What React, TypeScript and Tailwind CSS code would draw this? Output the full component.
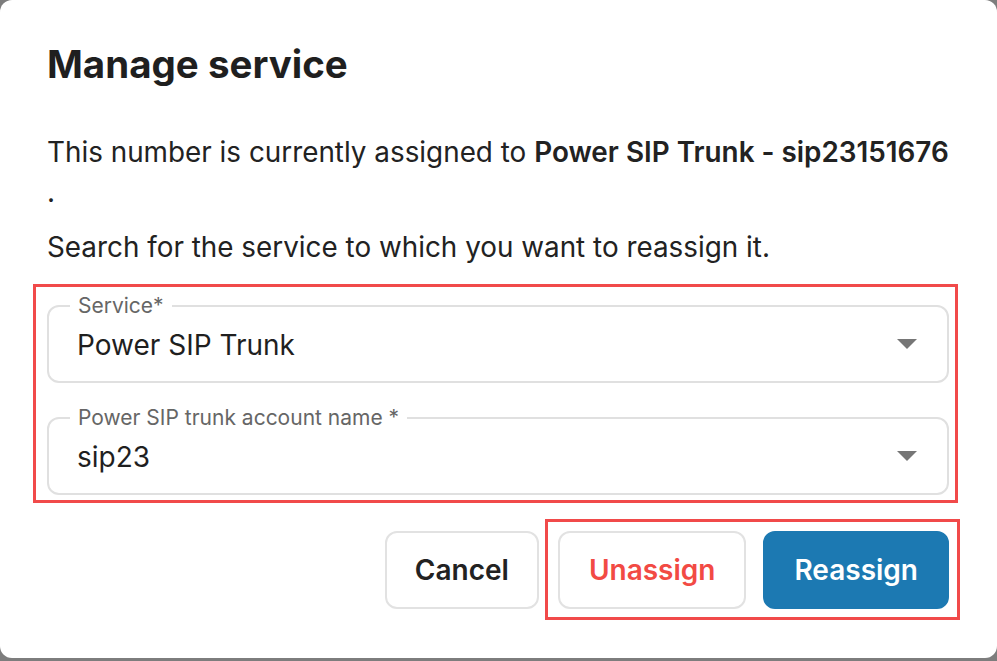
import { useState } from "react";

function Caret() {
  return (
    <svg width="20" height="10" viewBox="0 0 20 10" className="shrink-0">
      <path d="M0 0h20L10 10z" fill="#767676" />
    </svg>
  );
}

function SelectField({ label, value }: { label: string; value: string }) {
  return (
    <div className="relative flex h-[78px] items-center justify-between rounded-[12px] border-2 border-[#e0e0e0] pl-[28px] pr-[30px]">
      <span className="absolute -top-[14px] left-[21px] bg-white px-[8px] text-[21px] leading-[26px] text-[#666]">
        {label}
      </span>
      <span className="pt-[2px] text-[28px] text-[#1f1f1f]">{value}</span>
      <Caret />
    </div>
  );
}

export default function App() {
  const [service] = useState("Power SIP Trunk");
  const [account] = useState("sip23");

  return (
    <div className="h-[661px] w-[997px] bg-[#7d7d7d] font-['Inter',sans-serif]">
      <div className="flex h-[658px] flex-col rounded-[12px] bg-white pl-[47px] pr-[48px] pt-[41px]">
        <h1 className="text-[38.5px] font-bold leading-[46px] text-[#1f1f1f]">Manage service</h1>

        <p className="mt-[45px] text-[27.85px] leading-[40px] text-[#222]">
          <span className="whitespace-nowrap">
            This number is currently assigned to <b className="font-semibold">Power SIP Trunk - sip23151676</b>
          </span>
          <br />.
        </p>
        <p className="mt-[15px] text-[27.85px] leading-[40px] text-[#222]">
          Search for the service to which you want to reassign it.
        </p>

        {/* fields */}
        <div className="-ml-[14px] -mr-[9px] mt-[17px] flex flex-col gap-[34px] border-[3px] border-[#f14a4a] pb-[5px] pl-[11px] pr-[6px] pt-[18px]">
          <SelectField label="Service*" value={service} />
          <SelectField label="Power SIP trunk account name *" value={account} />
        </div>

        <div className="mt-[16px] flex items-center justify-end">
          <button className="h-[78px] rounded-[12px] border-2 border-[#e2e2e2] px-[28px] text-[28px] font-semibold text-[#222]">
            Cancel
          </button>
          <div className="-mr-[11px] ml-[6px] flex gap-[17px] border-[3px] border-[#f14a4a] pb-[8px] pl-[10px] pr-[8px] pt-[9px]">
            <button className="h-[78px] rounded-[12px] border-2 border-[#e2e2e2] px-[29px] text-[28px] font-semibold text-[#f24a44]">
              Unassign
            </button>
            <button className="h-[78px] rounded-[12px] border-2 border-[#1c79b2] bg-[#1c79b2] px-[29px] text-[28px] font-semibold text-white">
              Reassign
            </button>
          </div>
        </div>
      </div>
    </div>
  );
}
